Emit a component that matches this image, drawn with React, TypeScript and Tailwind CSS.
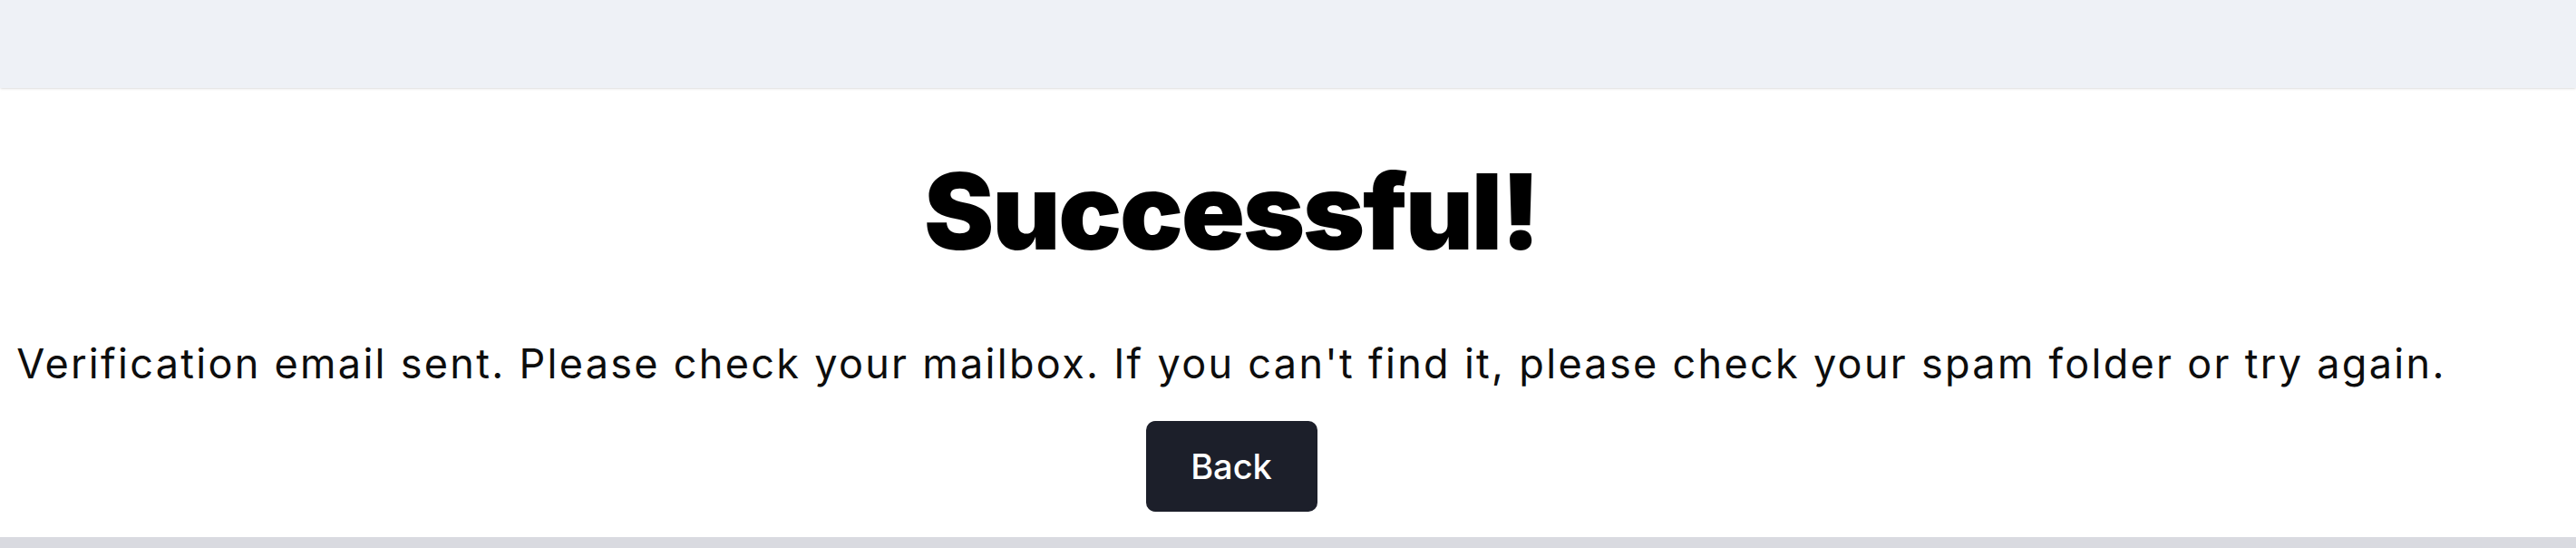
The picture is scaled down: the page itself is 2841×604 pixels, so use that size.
export default function App() {
    return (
        <div className="h-[604px] flex flex-col bg-white text-black" style={{ fontFamily: 'Inter, "Open Sans", sans-serif' }}>
            <header className="h-[97px] shrink-0 bg-[#eef1f6] shadow-sm" />

            <main className="flex-1 flex flex-col items-center pr-[125px]">
                <h1 className="mt-[78px] text-[116px] leading-none font-black tracking-[-2.2px]">
                    Successful!
                </h1>

                <p className="mt-[82px] text-[45px] leading-[56px] tracking-[2.3px] whitespace-nowrap text-center text-[#0d0d0d]">
                    Verification email sent. Please check your mailbox. If you
                    can't find it, please check your spam folder or try again.
                </p>

                <button className="mt-[35px] w-[189px] h-[100px] rounded-[10px] bg-[#1c1f2a] text-white text-[38px] font-medium">
                    Back
                </button>
            </main>

            <footer className="h-[12px] shrink-0 bg-[#d9dae0]" />
        </div>
    );
}
